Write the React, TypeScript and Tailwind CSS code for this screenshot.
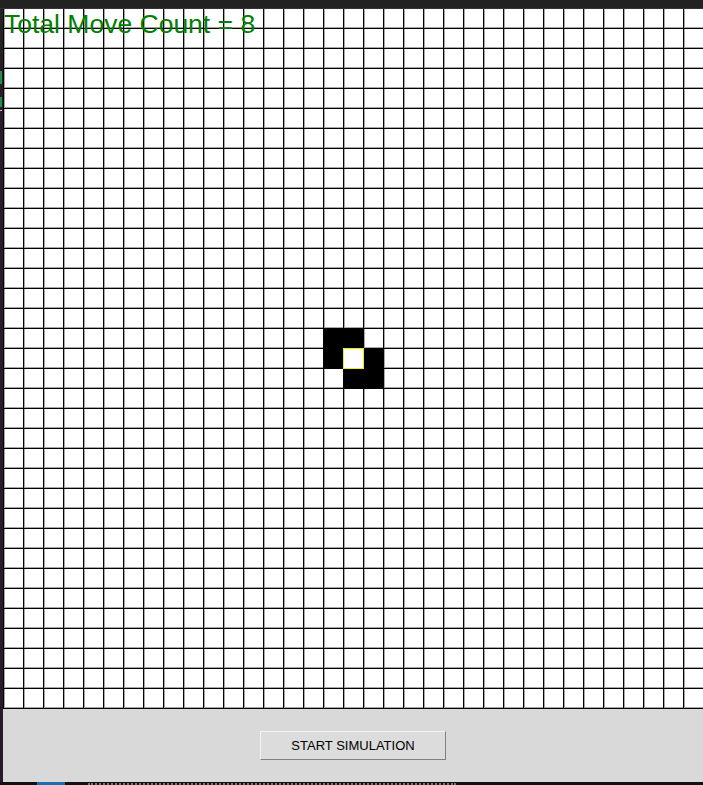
import React from "react";

const SIZE = 35;

// cells painted black on the board, as [col, row]
const filled = new Set(["16,16", "17,16", "16,17", "18,17", "17,18", "18,18"]);
const ant = "17,17";

const Cell = ({ col, row }: { col: number; row: number }) => {
  const key = `${col},${row}`;
  if (key === ant) {
    return (
      <div className="relative w-5 h-5 bg-white">
        <div className="absolute z-10 left-0 -top-px w-[21px] h-[21px] border border-[#eeee00]" />
      </div>
    );
  }
  if (filled.has(key)) {
    return <div className="w-5 h-5 bg-black" />;
  }
  return (
    <div className="w-5 h-5 border-l border-b border-black bg-white shadow-[inset_1px_-1px_0_rgba(0,0,0,0.35)]" />
  );
};

const Board = () => {
  const cells = [];
  for (let r = 0; r < SIZE; r++) {
    for (let c = 0; c < SIZE; c++) {
      cells.push(<Cell key={`${c}-${r}`} col={c} row={r} />);
    }
  }
  return (
    <div className="relative w-[700px] h-[700px] bg-white overflow-hidden">
      <div className="grid grid-cols-[repeat(35,20px)] grid-rows-[repeat(35,20px)]">{cells}</div>
      <div
        className="absolute left-px top-[2px] text-[26.5px] leading-none text-[#008000] whitespace-nowrap"
        style={{ fontFamily: '"Liberation Sans", Arial, sans-serif' }}
      >
        Total Move Count = 8
      </div>
    </div>
  );
};

export default function App() {
  return (
    <div className="w-[703px] h-[785px] bg-[#111111] overflow-hidden flex flex-col">
      <div className="h-[9px] bg-[#222222] border-b border-[#333333]" />
      <div className="flex">
        <div className="relative w-[3px] h-[773px] bg-[#2a1a28]">
          <div className="absolute top-0 left-0 w-[3px] h-[45px] bg-[#222222]" />
          <div className="absolute top-[62px] left-0 w-[2px] h-[13px] bg-[#1f8f4f]" />
          <div className="absolute top-[88px] left-0 w-[2px] h-[10px] bg-[#1f8f4f]" />
          <div className="absolute top-[101px] left-0 w-[2px] h-px bg-[#d8b8d0]" />
        </div>
        <div className="flex flex-col">
          <Board />
          <div className="h-[73px] bg-[#d9d9d9] flex items-center justify-center">
            <button
              className="w-[186px] h-[29px] bg-[#dcdcdc] border border-t-[#f4f4f4] border-l-[#f4f4f4] border-r-[#808080] border-b-[#808080] text-[13px] text-black flex items-center justify-center"
              style={{ fontFamily: '"Liberation Sans", Arial, sans-serif' }}
            >
              START SIMULATION
            </button>
          </div>
        </div>
      </div>
      <div className="relative h-[3px] bg-[#111111]">
        <div className="absolute left-[37px] top-0 w-[28px] h-[3px] bg-[#1a6fb0]" />
        <div className="absolute left-[88px] top-[1px] w-[368px] border-t-2 border-dotted border-[#777777]" />
      </div>
    </div>
  );
}
